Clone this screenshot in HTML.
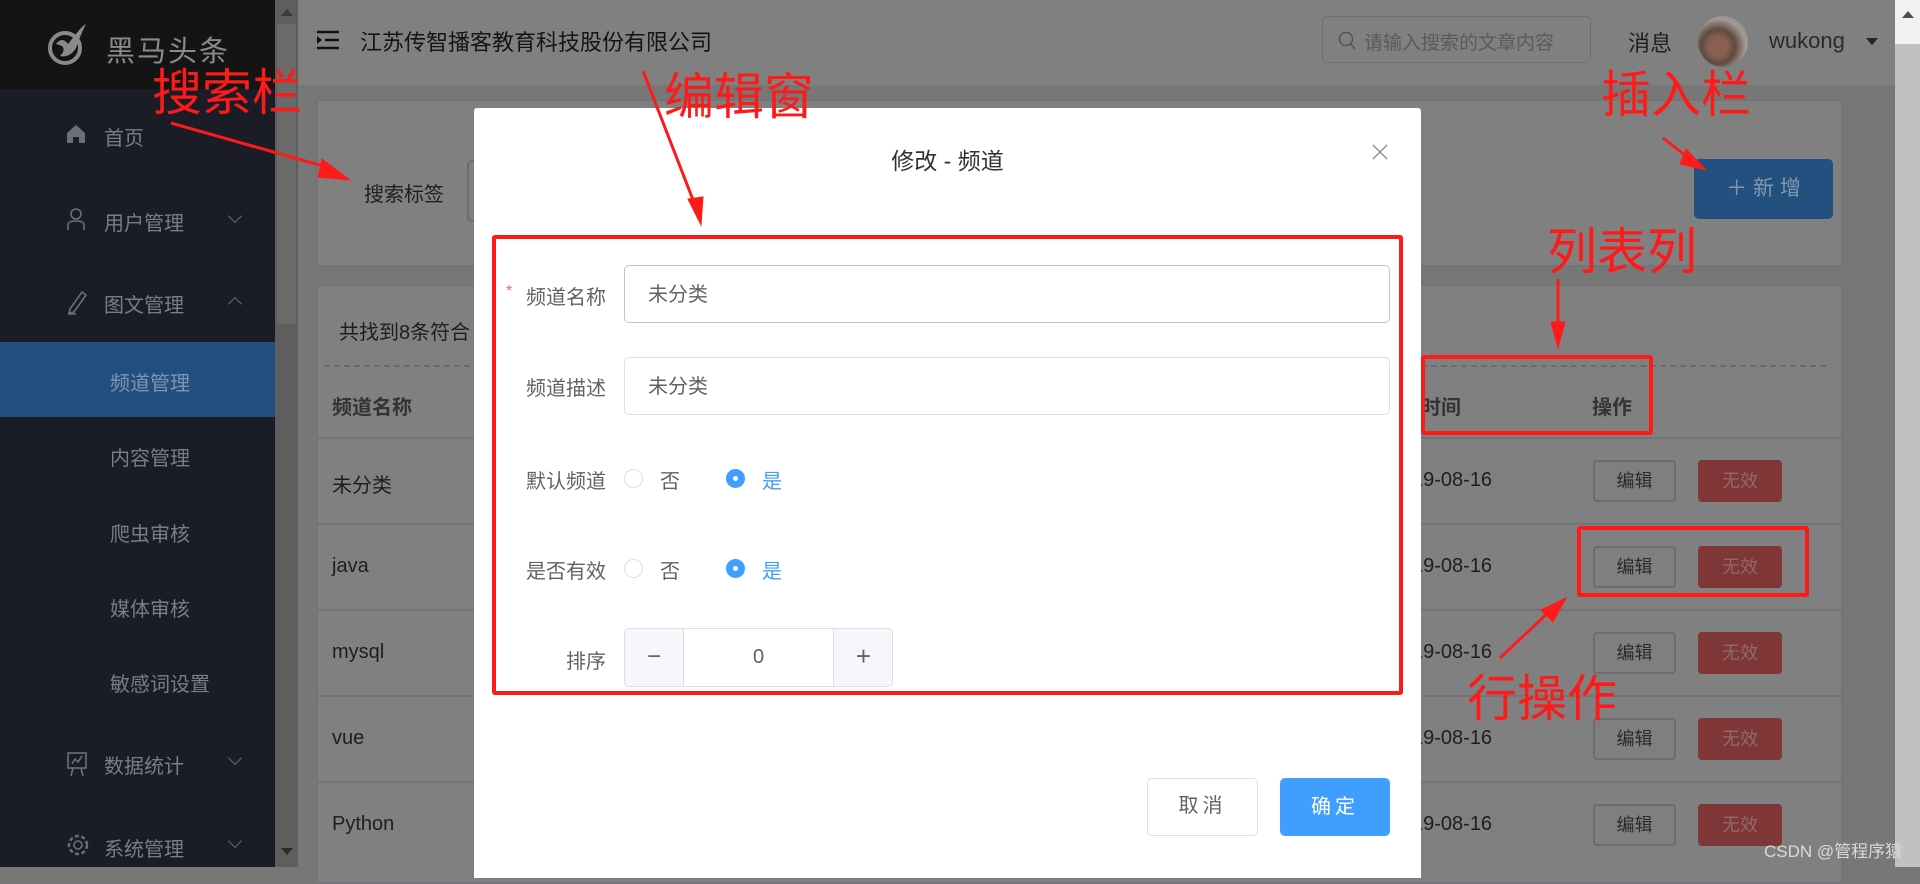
<!DOCTYPE html>
<html><head><meta charset="utf-8">
<style>
*{margin:0;padding:0;box-sizing:border-box}
body{width:1920px;height:867px;overflow:hidden;position:relative;background:#777;font-family:"Liberation Sans","Noto Sans CJK SC",sans-serif;}
.a{position:absolute}
.side{left:0;top:0;width:275px;height:867px;background:#1a1c26}
.logo{left:0;top:0;width:275px;height:89px;background:#141415}
.mi{position:absolute;color:#7c7d81;font-size:20px;white-space:nowrap}
.chev{position:absolute;left:230px;width:10px;height:10px;border-right:1.5px solid #6a6b70;border-bottom:1.5px solid #6a6b70;transform:rotate(45deg)}
.chevu{transform:rotate(-135deg)}
.txt{color:#1e1e1e;font-size:20px;white-space:nowrap}
.btnE{position:absolute;left:1593px;width:83px;height:42px;border:2px solid #6c6c70;border-radius:4px;color:#2a2a2a;font-size:18px;text-align:center;line-height:38px;background:#7f7f7f}
.btnW{position:absolute;left:1698px;width:84px;height:42px;background:#7f3636;border-radius:4px;color:#8f6a6a;font-size:18px;text-align:center;line-height:42px}
.row{position:absolute;left:316px;width:1527px;height:2px;background:#747478}
.red{color:#ff1a1a;font-size:50px;position:absolute;white-space:nowrap;line-height:1}
.lab{position:absolute;color:#606266;font-size:20px;white-space:nowrap;text-align:right;width:120px;left:486px}
.inp{position:absolute;left:624px;width:766px;height:58px;border:1.5px solid #dcdfe6;border-radius:5px;color:#606266;font-size:20px;padding-left:23px;line-height:58px}
.rad{position:absolute;width:19px;height:19px;border-radius:50%;border:1.5px solid #dcdfe6;background:#fff}
.radon{border:none;background:#409eff}
.radon::after{content:"";position:absolute;left:7px;top:7px;width:5px;height:5px;border-radius:50%;background:#fff}
</style></head><body>
<div class="a side"></div>
<div class="a logo"></div>
<svg class="a" style="left:46px;top:22px" width="40" height="50" viewBox="0 0 40 50">
<circle cx="19" cy="26" r="15" fill="none" stroke="#8a8a8a" stroke-width="4"/>
<path d="M10 22 Q16 14 22 22 L30 12 Q36 4 40 2 Q34 14 30 26 Q24 36 14 34 Q20 28 16 24 Z" fill="#8a8a8a"/>
</svg>
<div class="a" style="left:106px;top:28px;font-size:29px;color:#8a8a8a;letter-spacing:2px">黑马头条</div>
<svg class="a" style="left:66px;top:124px" width="20" height="20" viewBox="0 0 20 20"><path d="M10 1 L19 9 V19 H13 V13 H7 V19 H1 V9 Z" fill="#6e6f74"/></svg>
<div class="mi" style="left:104px;top:122px">首页</div>
<svg class="a" style="left:66px;top:207px" width="20" height="24" viewBox="0 0 20 24"><circle cx="10" cy="7" r="5" fill="none" stroke="#6e6f74" stroke-width="1.6"/><path d="M2 23 V18 Q2 14 10 14 Q18 14 18 18 V23" fill="none" stroke="#6e6f74" stroke-width="1.6"/></svg>
<div class="mi" style="left:104px;top:207px">用户管理</div>
<div class="chev" style="top:211px"></div>
<svg class="a" style="left:66px;top:289px" width="22" height="26" viewBox="0 0 22 26"><path d="M4 20 L16 3 L20 6 L8 23 L3 24 Z M2 25 H10" fill="none" stroke="#6e6f74" stroke-width="1.6"/></svg>
<div class="mi" style="left:104px;top:289px">图文管理</div>
<div class="chev chevu" style="top:299px"></div>
<div class="a" style="left:0;top:342px;width:275px;height:75px;background:#215080"></div>
<div class="mi" style="left:110px;top:367px;color:#7f95ad">频道管理</div>
<div class="mi" style="left:110px;top:442px">内容管理</div>
<div class="mi" style="left:110px;top:518px">爬虫审核</div>
<div class="mi" style="left:110px;top:593px">媒体审核</div>
<div class="mi" style="left:110px;top:668px">敏感词设置</div>
<svg class="a" style="left:66px;top:751px" width="22" height="26" viewBox="0 0 22 26"><rect x="2" y="2" width="18" height="15" fill="none" stroke="#6e6f74" stroke-width="1.6"/><path d="M6 13 L9 8 L12 11 L16 5 M7 17 L5 25 M15 17 L17 25" fill="none" stroke="#6e6f74" stroke-width="1.6"/></svg>
<div class="mi" style="left:104px;top:750px">数据统计</div>
<div class="chev" style="top:753px"></div>
<svg class="a" style="left:66px;top:833px" width="24" height="24" viewBox="0 0 24 24"><circle cx="12" cy="12" r="4" fill="none" stroke="#6e6f74" stroke-width="1.6"/><circle cx="12" cy="12" r="9" fill="none" stroke="#6e6f74" stroke-width="2.5" stroke-dasharray="4 2.5"/></svg>
<div class="mi" style="left:104px;top:833px">系统管理</div>
<div class="chev" style="top:836px"></div>
<div class="a" style="left:275px;top:0;width:23px;height:867px;background:#5e5e5e"></div>
<div class="a" style="left:277px;top:24px;width:19px;height:300px;background:#6a6a6a"></div>
<div class="a" style="left:281px;top:9px;width:0;height:0;border-left:6px solid transparent;border-right:6px solid transparent;border-bottom:7px solid #3c3c3c"></div>
<div class="a" style="left:281px;top:848px;width:0;height:0;border-left:6px solid transparent;border-right:6px solid transparent;border-top:7px solid #2a2a2a"></div>
<div class="a" style="left:298px;top:0;width:1597px;height:85px;background:#808080"></div>
<svg class="a" style="left:317px;top:30px" width="22" height="20" viewBox="0 0 22 20"><path d="M0 2 H22 M8 10 H22 M0 18 H22" stroke="#111" stroke-width="2.5"/><path d="M0 6 L5 10 L0 14 Z" fill="#111"/></svg>
<div class="a txt" style="left:360px;top:25px;font-size:22px;color:#141414">江苏传智播客教育科技股份有限公司</div>
<div class="a" style="left:1322px;top:16px;width:269px;height:47px;border:1.5px solid #6e6e72;border-radius:5px"></div>
<svg class="a" style="left:1338px;top:31px" width="18" height="20" viewBox="0 0 18 20"><circle cx="8" cy="8" r="6.5" fill="none" stroke="#555" stroke-width="1.5"/><path d="M13 13 L17 18" stroke="#555" stroke-width="1.5"/></svg>
<div class="a" style="left:1364px;top:28px;font-size:19px;color:#5a5a5c;white-space:nowrap">请输入搜索的文章内容</div>
<div class="a txt" style="left:1628px;top:26px;font-size:22px;color:#1f1f1f">消息</div>
<div class="a" style="left:1698px;top:16px;width:50px;height:51px;border-radius:50%;background:radial-gradient(circle at 40% 60%,#8a5f52 0 22%,#5e4a40 40%,#a39c94 65%,#7a7672 100%)"></div>
<div class="a" style="left:1769px;top:28px;font-size:22px;color:#2a2a2a">wukong</div>
<div class="a" style="left:1866px;top:38px;width:0;height:0;border-left:6px solid transparent;border-right:6px solid transparent;border-top:7px solid #222"></div>
<div class="a" style="left:1895px;top:0;width:25px;height:867px;background:#c1c1c1"></div>
<div class="a" style="left:1895px;top:0;width:25px;height:44px;background:#f1f1f1"></div>
<div class="a" style="left:1902px;top:11px;width:0;height:0;border-left:6px solid transparent;border-right:6px solid transparent;border-bottom:7px solid #505050"></div>
<div class="a" style="left:316px;top:99px;width:1527px;height:168px;background:#808080;border:2px solid #757579"></div>
<div class="a txt" style="left:364px;top:178px;font-size:20px">搜索标签</div>
<div class="a" style="left:467px;top:160px;width:20px;height:62px;border:2px solid #6c6c70;border-right:none;border-radius:5px 0 0 5px"></div>
<div class="a" style="left:1694px;top:159px;width:139px;height:60px;background:#22517f;border-radius:5px;color:#8197ad;font-size:21px;text-align:center;line-height:60px">＋ 新 增</div>
<div class="a" style="left:316px;top:284px;width:1527px;height:600px;background:#808080;border:2px solid #757579"></div>
<div class="a txt" style="left:339px;top:316px">共找到8条符合</div>
<div class="a" style="left:324px;top:365px;width:1502px;border-top:2px dashed #6a6a6e"></div>
<div class="a txt" style="left:332px;top:391px;font-weight:bold;color:#333">频道名称</div>
<div class="a txt" style="left:1421px;top:391px;font-weight:bold;color:#333">时间</div>
<div class="a txt" style="left:1592px;top:391px;font-weight:bold;color:#333">操作</div>
<div class="row" style="top:437px"></div>
<div class="row" style="top:523px"></div>
<div class="row" style="top:609px"></div>
<div class="row" style="top:695px"></div>
<div class="row" style="top:781px"></div>
<div class="a txt" style="left:332px;top:469px">未分类</div>
<div class="a txt" style="left:332px;top:555px">java</div>
<div class="a txt" style="left:332px;top:641px">mysql</div>
<div class="a txt" style="left:332px;top:727px">vue</div>
<div class="a txt" style="left:332px;top:813px">Python</div>
<div class="a txt" style="left:1412px;top:469px">19-08-16</div>
<div class="a txt" style="left:1412px;top:555px">19-08-16</div>
<div class="a txt" style="left:1412px;top:641px">19-08-16</div>
<div class="a txt" style="left:1412px;top:727px">19-08-16</div>
<div class="a txt" style="left:1412px;top:813px">19-08-16</div>
<div class="btnE" style="top:460px">编辑</div><div class="btnW" style="top:460px">无效</div>
<div class="btnE" style="top:546px">编辑</div><div class="btnW" style="top:546px">无效</div>
<div class="btnE" style="top:632px">编辑</div><div class="btnW" style="top:632px">无效</div>
<div class="btnE" style="top:718px">编辑</div><div class="btnW" style="top:718px">无效</div>
<div class="btnE" style="top:804px">编辑</div><div class="btnW" style="top:804px">无效</div>
<div class="a" style="left:474px;top:108px;width:947px;height:770px;background:#fff;border-radius:3px 3px 0 0"></div>
<div class="a" style="left:474px;top:142px;width:947px;text-align:center;font-size:23px;color:#303133">修改 - 频道</div>
<svg class="a" style="left:1372px;top:144px" width="16" height="16" viewBox="0 0 16 16"><path d="M1 1 L15 15 M15 1 L1 15" stroke="#909399" stroke-width="1.5"/></svg>
<div class="a" style="left:492px;top:235px;width:911px;height:460px;border:4px solid #ff1a1a;border-radius:3px"></div>
<div class="a" style="left:506px;top:283px;color:#f56c6c;font-size:16px">*</div>
<div class="lab" style="top:281px">频道名称</div>
<div class="inp" style="top:265px;border-color:#c0c4cc">未分类</div>
<div class="lab" style="top:372px">频道描述</div>
<div class="inp" style="top:357px">未分类</div>
<div class="lab" style="top:465px">默认频道</div>
<div class="rad" style="left:624px;top:469px"></div>
<div class="a" style="left:660px;top:465px;font-size:20px;color:#606266">否</div>
<div class="rad radon" style="left:726px;top:469px"></div>
<div class="a" style="left:762px;top:465px;font-size:20px;color:#409eff">是</div>
<div class="lab" style="top:555px">是否有效</div>
<div class="rad" style="left:624px;top:559px"></div>
<div class="a" style="left:660px;top:555px;font-size:20px;color:#606266">否</div>
<div class="rad radon" style="left:726px;top:559px"></div>
<div class="a" style="left:762px;top:555px;font-size:20px;color:#409eff">是</div>
<div class="lab" style="top:645px">排序</div>
<div class="a" style="left:624px;top:628px;width:269px;height:59px;border:1.5px solid #dcdfe6;border-radius:5px;overflow:hidden">
 <div class="a" style="left:0;top:0;width:59px;height:57px;background:#f5f7fa;border-right:1.5px solid #dcdfe6;text-align:center;line-height:55px;font-size:24px;color:#606266">−</div>
 <div class="a" style="left:59px;top:0;width:149px;height:57px;text-align:center;line-height:57px;font-size:20px;color:#606266">0</div>
 <div class="a" style="left:208px;top:0;width:60px;height:57px;background:#f5f7fa;border-left:1.5px solid #dcdfe6;text-align:center;line-height:55px;font-size:26px;color:#606266">+</div>
</div>
<div class="a" style="left:1147px;top:778px;width:111px;height:58px;border:1.5px solid #dcdfe6;border-radius:5px;text-align:center;line-height:55px;font-size:20px;color:#606266;letter-spacing:4px">取消</div>
<div class="a" style="left:1280px;top:778px;width:110px;height:58px;background:#409eff;border-radius:5px;text-align:center;line-height:58px;font-size:20px;color:#fff;letter-spacing:4px">确定</div>
<div class="red" style="left:152px;top:68px">搜索栏</div>
<div class="red" style="left:664px;top:72px">编辑窗</div>
<div class="red" style="left:1601px;top:70px">插入栏</div>
<div class="red" style="left:1547px;top:227px">列表列</div>
<div class="red" style="left:1467px;top:674px">行操作</div>
<div class="a" style="left:1421px;top:355px;width:232px;height:80px;border:4px solid #ff1a1a;border-radius:3px"></div>
<div class="a" style="left:1577px;top:526px;width:232px;height:71px;border:4px solid #ff1a1a;border-radius:3px"></div>
<svg class="a" style="left:0;top:0" width="1920" height="867" viewBox="0 0 1920 867">
<g fill="#ff1a1a" stroke="#ff1a1a">
<path d="M171 123 L330 168" stroke-width="3"/><path d="M350 180 L322 159 L318 177 Z"/>
<path d="M643 71 L695 205" stroke-width="3"/><path d="M701 225 L688 199 L703 197 Z"/>
<path d="M1663 138 L1695 163" stroke-width="3"/><path d="M1706 170 L1686 149 L1680 164 Z"/>
<path d="M1558 279 L1558 330" stroke-width="3"/><path d="M1558 348 L1551 322 L1565 322 Z"/>
<path d="M1500 658 L1552 609" stroke-width="3"/><path d="M1566 598 L1541 610 L1553 622 Z"/>
</g>
</svg>
<div class="a" style="left:1764px;top:837px;font-size:17px;color:#dadada;white-space:nowrap">CSDN @管程序猿</div>
</body></html>
